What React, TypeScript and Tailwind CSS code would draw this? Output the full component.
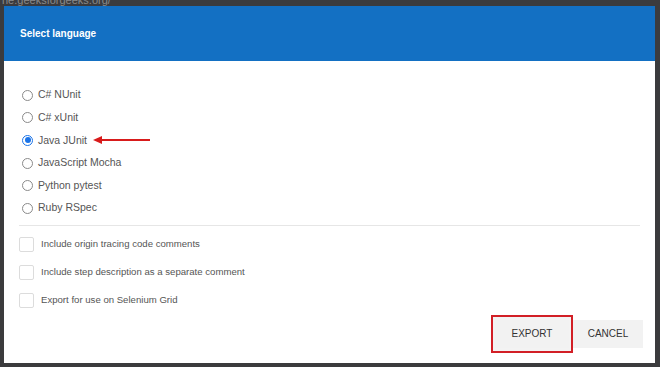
import { useState } from "react";

const languages = [
  "C# NUnit",
  "C# xUnit",
  "Java JUnit",
  "JavaScript Mocha",
  "Python pytest",
  "Ruby RSpec",
];

const options = [
  "Include origin tracing code comments",
  "Include step description as a separate comment",
  "Export for use on Selenium Grid",
];

function Radio({ checked }: { checked: boolean }) {
  return (
    <span
      className={`flex h-[11px] w-[11px] items-center justify-center rounded-full border ${
        checked ? "border-[#1a73e8]" : "border-[#8a8a8a]"
      } bg-white`}
    >
      {checked && <span className="h-[6px] w-[6px] rounded-full bg-[#1a73e8]" />}
    </span>
  );
}

function Arrow() {
  return (
    <svg width="58" height="10" viewBox="0 0 58 10" className="ml-[6px]">
      <line x1="6" y1="5" x2="57" y2="5" stroke="#d81b1b" strokeWidth="2" />
      <polygon points="0,5 9,1 9,9" fill="#d81b1b" />
    </svg>
  );
}

export default function App() {
  const [lang, setLang] = useState("Java JUnit");

  return (
    <div
      className="flex h-[367px] w-[660px] flex-col overflow-hidden bg-[#3b3b3d]"
      style={{ fontFamily: "'Liberation Sans', Arial, sans-serif" }}
    >
      <div className="relative h-[6px] shrink-0 overflow-hidden">
        <div className="absolute -top-[6px] left-[2px] whitespace-nowrap text-[11px] leading-[12px] text-[#8a8a8a]">
          ne.geeksforgeeks.org/
        </div>
      </div>
      <div className="ml-[4px] flex h-[357px] w-[651px] shrink-0 flex-col bg-white">
        <div className="flex h-[55px] shrink-0 items-center bg-[#1370c3] pl-[16px] text-[10px] font-bold text-white">
          Select language
        </div>

        <div className="flex flex-col pl-[15px] pr-[15px] pt-[23px]">
          {languages.map((l) => (
            <label
              key={l}
              className="flex h-[22.6px] cursor-pointer items-center pl-[3px] text-[10.5px] text-[#555]"
              onClick={() => setLang(l)}
            >
              <Radio checked={lang === l} />
              <span className="ml-[5px]">{l}</span>
              {l === "Java JUnit" && <Arrow />}
            </label>
          ))}

          <div className="mb-[5px] mt-[5px] h-px w-[621px] bg-[#e6e6e6]" />

          {options.map((o) => (
            <div key={o} className="flex h-[28px] items-center text-[9.6px] text-[#555]">
              <span className="h-[15px] w-[15px] rounded-[2px] border border-[#dcdcdc] bg-white" />
              <span className="ml-[7px]">{o}</span>
            </div>
          ))}
        </div>

        <div className="mt-auto flex justify-end pb-[11px] pr-[12px]">
          <div className="border-2 border-[#d21f26] bg-[#f3f3f3] px-[2px] py-[3px]">
            <button className="flex h-[28px] w-[74px] items-center justify-center bg-[#f2f2f2] text-[10px] text-[#333]">
              EXPORT
            </button>
          </div>
          <div className="flex items-center">
            <button className="flex h-[28px] w-[70px] items-center justify-center bg-[#f2f2f2] text-[10px] text-[#333]">
              CANCEL
            </button>
          </div>
        </div>
      </div>
    </div>
  );
}
